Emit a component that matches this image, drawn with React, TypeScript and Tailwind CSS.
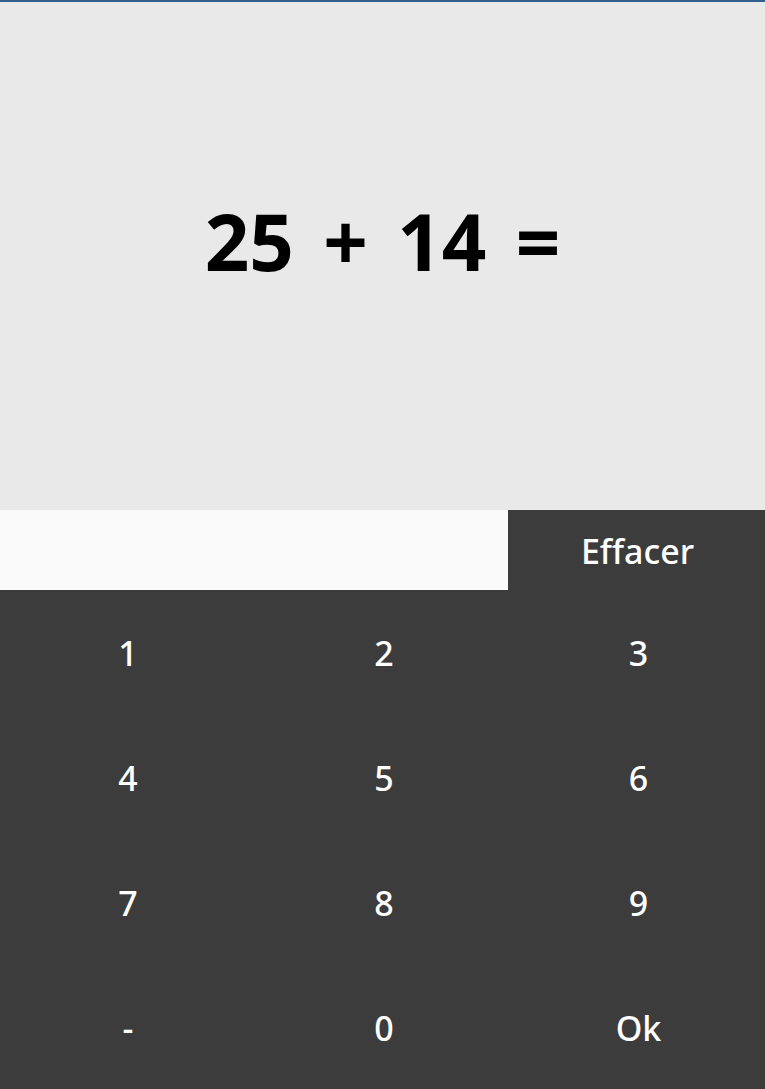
import React from "react";

const keys = ["1", "2", "3", "4", "5", "6", "7", "8", "9", "-", "0", "Ok"];

const App = () => {
  return (
    <div
      className="w-[765px] h-[1089px] flex flex-col bg-[#3c3c3c] overflow-hidden"
      style={{ fontFamily: '"Noto Sans", "Open Sans", sans-serif' }}
    >
      <div className="h-[2px] bg-[#2f5f8a]" />
      <div className="h-[508px] bg-[#e9e9e9] flex items-center justify-center pb-[30px]">
        <span className="text-[78px] font-bold text-black leading-none [word-spacing:9px]">
          25 + 14 =
        </span>
      </div>
      <div className="h-[80px] flex">
        <div className="w-[508px] bg-[#fafafa]" />
        <button className="flex-1 flex items-center justify-center text-white text-[34px] font-medium pt-[2px] pl-[2px]">
          Effacer
        </button>
      </div>
      <div className="flex-1 grid grid-cols-[256px_256px_253px] grid-rows-4">
        {keys.map((k) => (
          <button
            key={k}
            className="flex items-center justify-center text-white text-[34px] font-medium pt-[3px]"
          >
            {k}
          </button>
        ))}
      </div>
    </div>
  );
};

export default App;
